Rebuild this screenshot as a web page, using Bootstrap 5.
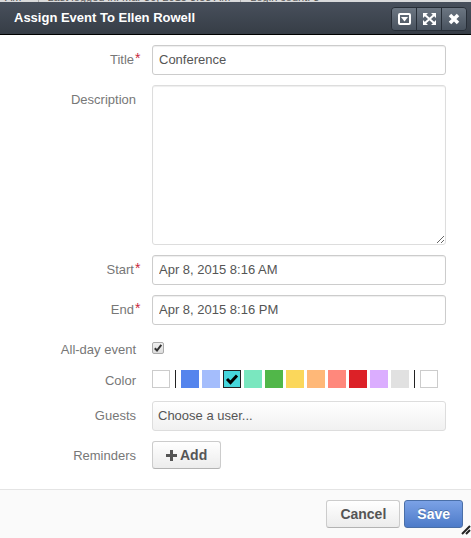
<!DOCTYPE html>
<html lang="en">
<head>
<meta charset="utf-8">
<meta name="viewport" content="width=device-width, initial-scale=1">
<title>Assign Event To Ellen Rowell</title>
<link href="https://cdn.jsdelivr.net/npm/bootstrap@5.3.0/dist/css/bootstrap.min.css" rel="stylesheet">
<style>
body{font:13px/20px "Liberation Sans",Arial,sans-serif;color:#555;background:#fff}
.status-strip{height:2px;background:#d9dadb;color:#555;font-size:11px;line-height:14px;white-space:nowrap;padding-left:5px}
.status-strip span{margin-top:-10px}
.status-strip .sep{border-left:1px solid #aaa;padding-left:9px;padding-right:10px}
.dialog-head{height:33px;background:linear-gradient(#48505c,#363d46);border-bottom:1px solid #000;padding:1px 4px 0 14px}
.dialog-title{font-size:13px;line-height:20px;font-weight:bold;color:#fff;padding-bottom:2px}
.tool-group{border:1px solid #272e37;border-radius:4px;overflow:hidden}
.tool-group button{width:25px;height:22px;border:0;padding:0;background:linear-gradient(#6c7682,#48525e);color:#fff}
.tool-group button+button{border-left:1px solid #272e37}
.tool-group button:first-child{width:24px}
.tool-group svg,.pick svg,.add-btn svg{display:block}
.event-form{padding:10px 25px 0 0}
.form-line{display:grid;grid-template-columns:136px minmax(0,1fr);column-gap:16px;margin-bottom:10px}
.form-line>label,.form-line>.line-label{text-align:right;padding-top:5px;color:#777;position:relative}
.form-line>.required{padding-right:2px}
.required::after{content:"*";color:#c8283c;position:absolute;left:100%;top:3px;margin-left:-1px;font-size:14px}
.field{font:inherit;color:#555;border:1px solid #ccc;border-radius:3px;padding:3px 6px 5px;box-shadow:inset 0 1px 1px rgba(0,0,0,.07);height:30px}
textarea.field{height:160px;border-color:#ddd;resize:vertical;display:block}
select.field{appearance:none;border-color:#ddd;background:linear-gradient(#fff,#f1f1f1);padding:4px 5px;box-shadow:none}
.day-check{appearance:none;width:12px;height:12px;margin:7px 0 0;border:1px solid #aaa;border-radius:2px;background:linear-gradient(#f0f0f0,#ddd);display:block}
.day-check:checked{background:url("data:image/svg+xml,%3Csvg xmlns='http://www.w3.org/2000/svg' viewBox='0 0 10 10'%3E%3Cpath d='M1.8 5.2 4 7.5 8.3 1.8' fill='none' stroke='%23333' stroke-width='2'/%3E%3C/svg%3E") center/10px no-repeat,linear-gradient(#f0f0f0,#ddd)}
.check-line{min-height:25px}
.form-line.color-line>.line-label{padding-top:1px}
.swatches{gap:3px}
.pick{width:18px;height:18px;padding:0;border:0;background:#fff}
.pick.plain{border:1px solid #ccc}
.pick.chosen{border:1px solid #222}
.divider{width:1px;height:18px;margin:0 2px;background:#222}
.pick.c1{background:#5484ed}.pick.c2{background:#a4bdfc}.pick.c3{background:#46d6db}.pick.c4{background:#7ae7bf}.pick.c5{background:#51b749}.pick.c6{background:#fbd75b}.pick.c7{background:#ffb878}.pick.c8{background:#ff887c}.pick.c9{background:#dc2127}.pick.c10{background:#dbadff}.pick.c11{background:#e1e1e1}
.act{font:bold 14px/20px "Liberation Sans",Arial,sans-serif;height:28px;padding:0 13px;border:1px solid #ccc;border-bottom-color:#b3b3b3;border-radius:3px;background:linear-gradient(#fff,#ececec);color:#555}
.act.save{padding:0 12px;color:#fff;border-color:#4a6fa8;background:linear-gradient(#7ba2e6,#4d7bc9);text-shadow:0 -1px 0 rgba(0,0,0,.25)}
.add-btn{gap:3px}
.dialog-foot{background:#fafafa;border-top:1px solid #e4e4e4;padding:10px 8px 10px 0;gap:4px}
.grip{position:absolute;right:0;bottom:3px}
</style>
<script src="https://cdn.jsdelivr.net/npm/bootstrap@5.3.0/dist/js/bootstrap.bundle.min.js"></script>
</head>
<body class="min-vh-100 d-flex flex-column">
<div class="status-strip d-flex overflow-hidden"><span class="pe-3">AM</span><span class="sep">Last logged in: Mar 30, 2015 3:53 AM</span><span class="sep">Login count: 3</span></div>
<header class="dialog-head d-flex align-items-center justify-content-between">
<h1 class="dialog-title m-0">Assign Event To Ellen Rowell</h1>
<div class="tool-group d-flex">
<button type="button" aria-label="Minimize" class="d-flex align-items-center justify-content-center"><svg width="13" height="12" viewBox="0 0 13 12"><rect x="1" y="1" width="11" height="10" rx="1" fill="none" stroke="#fff" stroke-width="2"/><path d="M3 4h7L6.500 8.500z" fill="#fff"/></svg></button>
<button type="button" aria-label="Maximize" class="d-flex align-items-center justify-content-center"><svg width="13" height="12" viewBox="0 0 13 12"><path d="M0 0h5L0 5zM13 0v5L8 0zM0 12V7l5 5zM13 12H8l5-5z" fill="#fff"/><path d="M2 2l9 8M11 2l-9 8" stroke="#fff" stroke-width="2"/></svg></button>
<button type="button" aria-label="Close" class="d-flex align-items-center justify-content-center"><svg width="12" height="12" viewBox="0 0 12 12"><path d="M2 2l8 8M10 2l-8 8" stroke="#fff" stroke-width="3.500"/></svg></button>
</div>
</header>
<form class="d-flex flex-column flex-grow-1">
<div class="event-form flex-grow-1">
<div class="form-line"><label for="title" class="required">Title</label><input id="title" class="field w-100" value="Conference" required></div>
<div class="form-line"><label for="desc">Description</label><textarea id="desc" class="field w-100"></textarea></div>
<div class="form-line"><label for="start" class="required">Start</label><input id="start" class="field w-100" value="Apr 8, 2015 8:16 AM" required></div>
<div class="form-line"><label for="end" class="required">End</label><input id="end" class="field w-100" value="Apr 8, 2015 8:16 PM" required></div>
<div class="form-line check-line"><label for="allday">All-day event</label><div><input id="allday" type="checkbox" class="day-check" checked></div></div>
<div class="form-line color-line"><span class="line-label" id="colorlabel">Color</span>
<div class="swatches d-flex" role="group" aria-labelledby="colorlabel">
<button type="button" class="pick plain" aria-label="No color"></button><span class="divider"></span>
<button type="button" class="pick c1" aria-label="Blue"></button><button type="button" class="pick c2" aria-label="Light blue"></button><button type="button" class="pick c3 chosen" aria-label="Turquoise" aria-pressed="true"><svg width="16" height="16" viewBox="0 0 16 16"><path d="M3 8l3.500 3.500L13 4.500" fill="none" stroke="#000" stroke-width="3"/></svg></button><button type="button" class="pick c4" aria-label="Mint"></button><button type="button" class="pick c5" aria-label="Green"></button><button type="button" class="pick c6" aria-label="Yellow"></button><button type="button" class="pick c7" aria-label="Orange"></button><button type="button" class="pick c8" aria-label="Salmon"></button><button type="button" class="pick c9" aria-label="Red"></button><button type="button" class="pick c10" aria-label="Purple"></button><button type="button" class="pick c11" aria-label="Gray"></button>
<span class="divider"></span><button type="button" class="pick plain" aria-label="Custom color"></button>
</div></div>
<div class="form-line"><label for="guests">Guests</label><select id="guests" class="field w-100"><option>Choose a user...</option></select></div>
<div class="form-line"><span class="line-label">Reminders</span><div><button type="button" class="act add-btn d-flex align-items-center"><svg width="11" height="11" viewBox="0 0 11 11"><path d="M5.500 0v11M0 5.500h11" stroke="#555" stroke-width="3"/></svg>Add</button></div></div>
</div>
<footer class="dialog-foot d-flex justify-content-end position-relative">
<button type="button" class="act">Cancel</button><button type="submit" class="act save">Save</button>
<svg class="grip" width="10" height="10" viewBox="0 0 10 10"><path d="M1 9L9 1M5 9l4-4" stroke="#222" stroke-width="2"/></svg>
</footer>
</form>
</body>
</html>
